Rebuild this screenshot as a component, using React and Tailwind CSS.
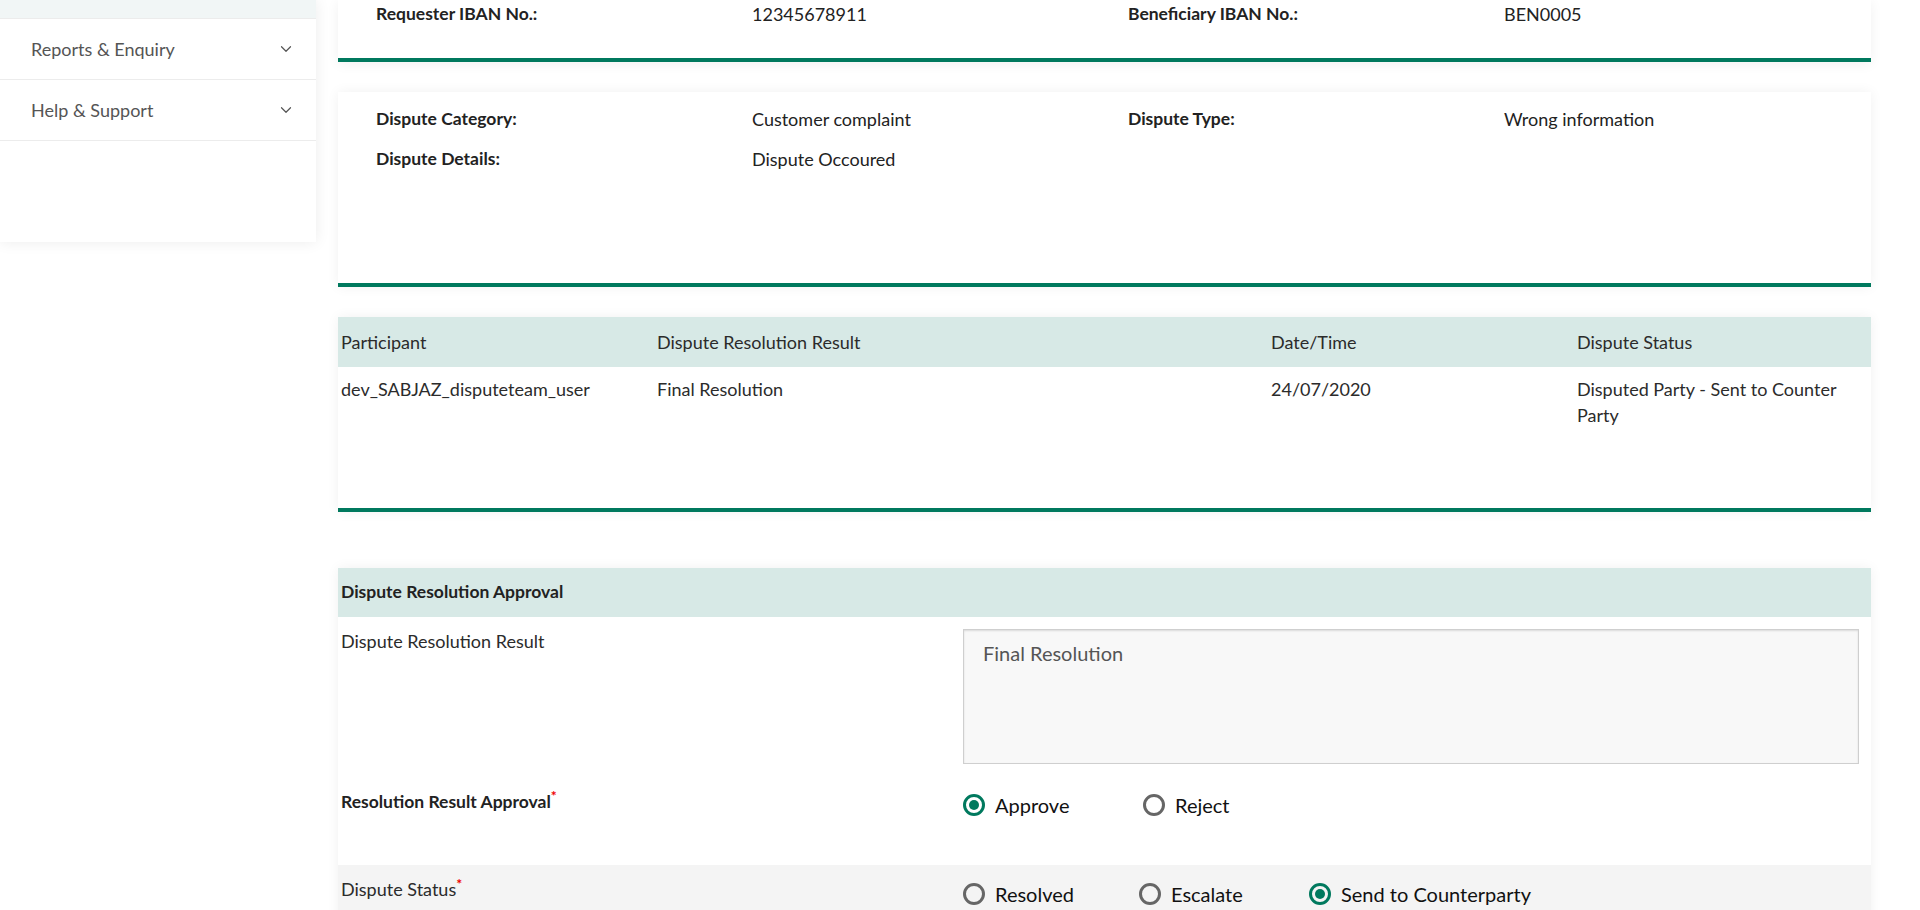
import { ChevronDown } from 'lucide-react';

const font = "font-['Lato','Liberation_Sans',sans-serif]";

const SideItem = ({ label }) => (
  <div className="flex h-[61px] items-center justify-between border-b border-[#ececec] pl-[31px] pr-[21px]">
    <span className="text-[18px] text-[#555]">{label}</span>
    <ChevronDown size={18} strokeWidth={1.6} className="text-[#555]" />
  </div>
);

const Radio = ({ checked, label, className = '' }) => (
  <label className={`flex items-center gap-[10px] ${className}`}>
    {checked ? (
      <span className="flex h-[22px] w-[22px] items-center justify-center rounded-full border-[3px] border-[#00795e]">
        <span className="h-[10px] w-[10px] rounded-full bg-[#00795e]" />
      </span>
    ) : (
      <span className="h-[22px] w-[22px] rounded-full border-[3px] border-[#666]" />
    )}
    <span className="text-[20px] leading-[30px] text-[#111]">{label}</span>
  </label>
);

const Req = () => <sup className="text-[14px] font-bold text-[#e00]">*</sup>;

const InfoPair = ({ label, value }) => (
  <>
    <div className="text-[17.5px] font-bold text-[#222]">{label}</div>
    <div className="text-[#222]">{value}</div>
  </>
);

const App = () => {
  return (
    <div className={`${font} flex min-h-[910px] bg-white text-[18px] text-[#2b2b2b]`}>
      {/* Sidebar */}
      <aside className="h-[242px] w-[316px] shrink-0 bg-white shadow-[0_0_14px_rgba(0,0,0,0.08)]">
        <div className="h-[19px] border-b border-[#ececec] bg-[#f1f6f6]" />
        <SideItem label="Reports & Enquiry" />
        <SideItem label="Help & Support" />
      </aside>

      {/* Main */}
      <main className="ml-[22px] w-[1533px]">
        {/* Card: IBAN */}
        <section className="border-b-4 border-[#00795e] bg-white pb-[32px] pt-[2px] shadow-[0_2px_12px_rgba(0,0,0,0.06)]">
          <div className="grid grid-cols-[376px_376px_376px_1fr] items-center pl-[38px] leading-[24px]">
            <InfoPair label="Requester IBAN No.:" value="12345678911" />
            <InfoPair label="Beneficiary IBAN No.:" value="BEN0005" />
          </div>
        </section>

        {/* Card: dispute info */}
        <section className="mt-[30px] h-[195px] border-b-4 border-[#00795e] bg-white pt-[15px] shadow-[0_0_12px_rgba(0,0,0,0.06)]">
          <div className="grid grid-cols-[376px_376px_376px_1fr] items-center gap-y-[16px] pl-[38px] leading-[24px]">
            <InfoPair label="Dispute Category:" value="Customer complaint" />
            <InfoPair label="Dispute Type:" value="Wrong information" />
            <InfoPair label="Dispute Details:" value="Dispute Occoured" />
          </div>
        </section>

        {/* Card: resolution history */}
        <section className="mt-[30px] h-[195px] border-b-4 border-[#00795e] bg-white shadow-[0_0_12px_rgba(0,0,0,0.06)]">
          <div className="grid h-[50px] grid-cols-[316px_614px_306px_1fr] items-center bg-[#d7e9e6]">
            <div className="pl-[3px]">Participant</div>
            <div className="pl-[3px]">Dispute Resolution Result</div>
            <div className="pl-[3px]">Date/Time</div>
            <div className="pl-[3px]">Dispute Status</div>
          </div>
          <div className="grid grid-cols-[316px_614px_306px_1fr] pt-[9px] leading-[26px]">
            <div className="pl-[3px]">dev_SABJAZ_disputeteam_user</div>
            <div className="pl-[3px]">Final Resolution</div>
            <div className="pl-[3px]">24/07/2020</div>
            <div className="pl-[3px]">
              Disputed Party - Sent to Counter
              <br />
              Party
            </div>
          </div>
        </section>

        {/* Card: approval form */}
        <section className="mt-[56px] bg-white shadow-[0_0_12px_rgba(0,0,0,0.06)]">
          <div className="flex h-[49px] items-center bg-[#d7e9e6] pl-[3px] text-[17.5px] font-bold text-[#222]">
            Dispute Resolution Approval
          </div>

          <div className="grid grid-cols-[625px_1fr] py-[12px]">
            <div className="pl-[3px] leading-[24px]">Dispute Resolution Result</div>
            <div className="pr-[12px]">
              <div className="h-[135px] border border-[#cfcfcf] bg-[#f8f8f8] px-[19px] py-[8px] text-[20px] text-[#555] shadow-[inset_0_1px_2px_rgba(0,0,0,0.12)]">
                Final Resolution
              </div>
            </div>
          </div>

          <div className="grid h-[89px] grid-cols-[625px_1fr]">
            <div className="pl-[3px] pt-[14px] text-[17.5px] font-bold leading-[24px] text-[#222]">
              Resolution Result Approval
              <Req />
            </div>
            <div className="flex items-start pt-[14px]">
              <Radio checked label="Approve" className="w-[180px]" />
              <Radio label="Reject" />
            </div>
          </div>

          <div className="grid h-[60px] grid-cols-[625px_1fr] bg-[#f4f4f4]">
            <div className="pl-[3px] pt-[12px] leading-[24px]">
              Dispute Status
              <Req />
            </div>
            <div className="flex items-start pt-[14px]">
              <Radio label="Resolved" className="w-[176px]" />
              <Radio label="Escalate" className="w-[170px]" />
              <Radio checked label="Send to Counterparty" />
            </div>
          </div>
        </section>
      </main>
    </div>
  );
};

export default App;
